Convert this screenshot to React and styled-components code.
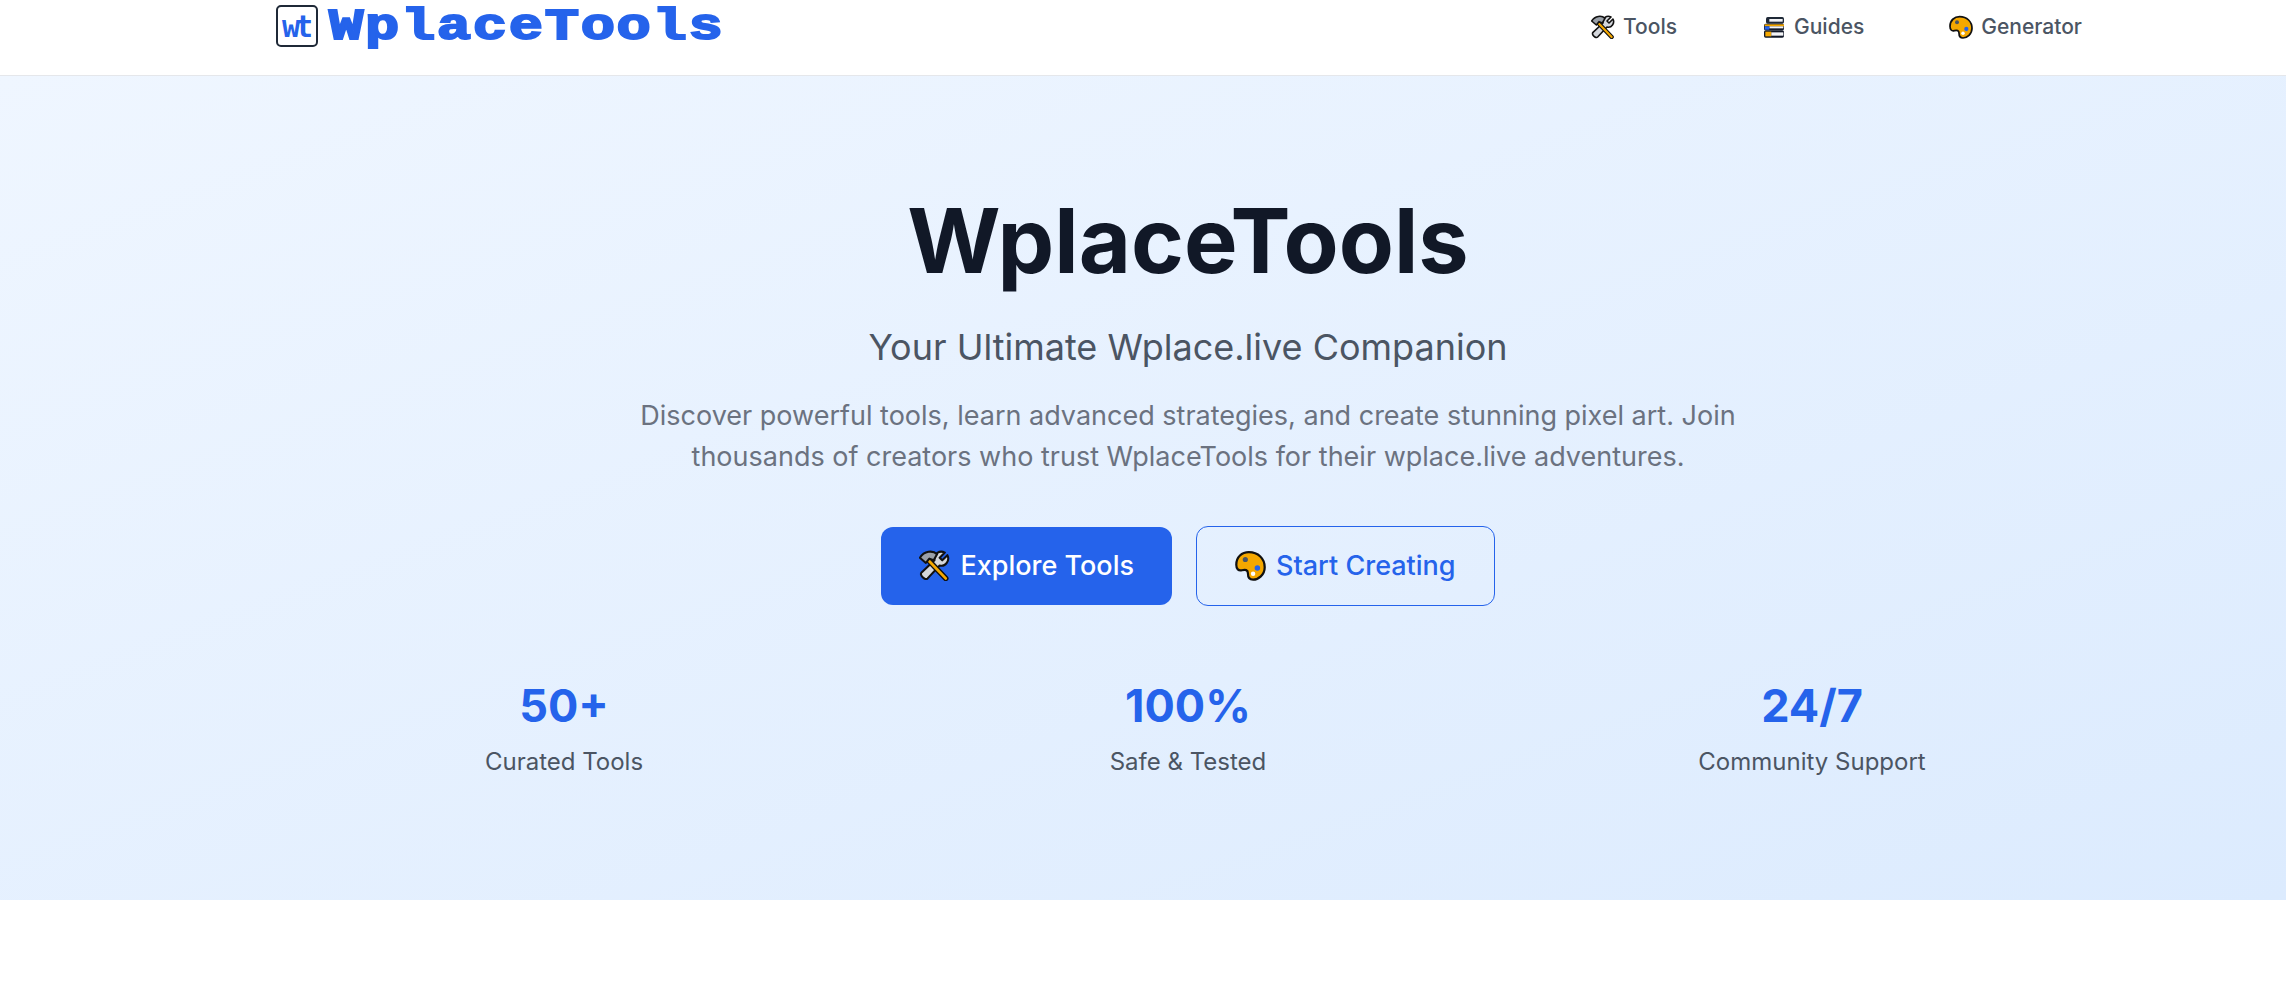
import styled, { createGlobalStyle } from "styled-components";

const GlobalStyle = createGlobalStyle`
  html, body {
    margin: 0;
    background: #ffffff;
    overflow: hidden;
  }
  body {
    font-family: Inter, "Liberation Sans", sans-serif;
  }
`;

const Page = styled.div`
  width: 2286px;
  height: 991px;
  background: #ffffff;
`;

const Header = styled.header`
  height: 76px;
  box-sizing: border-box;
  border-bottom: 1px solid #e5e7eb;
  padding: 0 204px 0 276px;
  display: flex;
  align-items: center;
  justify-content: space-between;
  background: #ffffff;
`;

const Brand = styled.div`
  display: flex;
  align-items: center;
  gap: 11px;
  margin-top: -23px;
`;

const LogoMark = styled.div`
  width: 42px;
  height: 42px;
  box-sizing: border-box;
  border: 2px solid #1f2937;
  border-radius: 5px;
  display: flex;
  align-items: center;
  justify-content: center;
  color: #2563eb;
  font-family: "DejaVu Sans Mono", monospace;
  font-weight: 700;
  font-size: 30px;
  letter-spacing: -5px;
  padding-right: 4px;
  background: #ffffff;
`;

const Wordmark = styled.div`
  color: #2563eb;
  font-family: "Liberation Mono", monospace;
  font-weight: 700;
  font-size: 45px;
  line-height: 44px;
  letter-spacing: 1.3px;
  margin-top: 3px;
  transform: scaleX(1.27);
  transform-origin: left center;
  -webkit-text-stroke: 2px #2563eb;
`;

const Nav = styled.nav`
  display: flex;
  align-items: center;
  gap: 85px;
  margin-top: -22px;
`;

const NavItem = styled.a`
  display: flex;
  align-items: center;
  gap: 8px;
  color: #4b5563;
  font-size: 21px;
  font-weight: 500;
  line-height: 28px;
`;

const Hero = styled.section`
  height: 824px;
  box-sizing: border-box;
  padding: 120px 100px 0 190px;
  background: linear-gradient(to bottom right, #eff6ff 0%, #dcebfe 100%);
  text-align: center;
`;

const Title = styled.h1`
  margin: 0;
  color: #111827;
  font-size: 90px;
  font-weight: 700;
  line-height: 90px;
`;

const Subtitle = styled.p`
  margin: 41px 0 0;
  color: #4b5563;
  font-size: 36px;
  font-weight: 400;
  line-height: 40px;
`;

const Lead = styled.p`
  margin: 28px auto 0;
  width: 1152px;
  color: #6b7280;
  font-size: 27px;
  line-height: 41px;
`;

const Actions = styled.div`
  margin-top: 49px;
  display: flex;
  justify-content: center;
  align-items: center;
  gap: 24px;
`;

const Button = styled.a`
  height: ${(p) => (p.$outline ? "80px" : "78px")};
  box-sizing: border-box;
  padding: 0 38px 1px;
  display: flex;
  align-items: center;
  gap: 10px;
  border-radius: 12px;
  font-size: 27px;
  font-weight: 500;
  background: ${(p) => (p.$outline ? "transparent" : "#2563eb")};
  color: ${(p) => (p.$outline ? "#2563eb" : "#ffffff")};
  border: ${(p) => (p.$outline ? "1px solid #2563eb" : "none")};
`;

const Stats = styled.div`
  margin: 77px auto 0;
  display: grid;
  grid-template-columns: repeat(3, 1fr);
  gap: 32px;
  width: 1840px;
`;

const Stat = styled.div`
  display: flex;
  flex-direction: column;
  align-items: center;
`;

const StatValue = styled.div`
  color: #2563eb;
  font-size: 45px;
  font-weight: 700;
  line-height: 45px;
`;

const StatLabel = styled.div`
  margin-top: 18px;
  color: #4b5563;
  font-size: 24px;
  line-height: 32px;
`;

const ToolsIcon = ({ size }) => (
  <svg width={size} height={size} viewBox="0 0 36 36" aria-hidden="true">
    <g strokeLinecap="round" strokeLinejoin="round">
      <path
        d="M33 6 L27 12 L24 9 L30 3 C24 0 17 4 18 12 L3 26 C0 29 7 36 10 33 L24 18 C31 20 36 12 33 6 Z"
        fill="#d4d7dc"
        stroke="#111"
        strokeWidth="2.4"
      />
      <path d="M12 13 L31 33" stroke="#111" strokeWidth="6.5" fill="none" />
      <path d="M12 13 L31 33" stroke="#f5a800" strokeWidth="3.2" fill="none" />
      <path
        d="M1 9 C6 1 16 0 21 5 L17 12 L12 10 L8 15 Z"
        fill="#9aa0a8"
        stroke="#111"
        strokeWidth="2.4"
      />
    </g>
  </svg>
);

const BooksIcon = ({ size }) => (
  <svg width={size} height={size} viewBox="0 0 36 36" aria-hidden="true">
    <rect x="6" y="3" width="27" height="10" rx="2.5" fill="#1f2937" />
    <rect x="11" y="6" width="20" height="4" fill="#f3f4f6" />
    <rect x="3" y="13" width="30" height="10" rx="2.5" fill="#111827" />
    <rect x="4" y="14" width="29" height="3" fill="#f5a800" />
    <rect x="11" y="17" width="21" height="3" fill="#f3f4f6" />
    <rect x="3" y="23" width="30" height="11" rx="2.5" fill="#111827" />
    <rect x="5" y="25" width="9" height="7" fill="#f5a800" />
    <rect x="14" y="26" width="18" height="5" fill="#f3f4f6" />
    <rect x="4" y="17" width="7" height="5" fill="#2563eb" />
  </svg>
);

const PaletteIcon = ({ size }) => (
  <svg width={size} height={size} viewBox="0 0 36 36" aria-hidden="true">
    <path
      d="M16 2.5 C27 2.5 34.5 10 34.5 20 C34.5 29 27 34.5 21 34.5 C16 34.5 15 31 15 27 C15 23 12 22.5 8 23.5 C4 24.5 1.5 22 1.5 17 C1.5 8 8 2.5 16 2.5 Z"
      fill="#f5a800"
      stroke="#111"
      strokeWidth="2.6"
    />
    <circle cx="12" cy="11" r="3" fill="#4b5563" />
    <circle cx="26" cy="21" r="3.2" fill="#2563eb" />
    <circle cx="21" cy="27.5" r="2.6" fill="#ffffff" />
  </svg>
);

export default function App() {
  return (
    <Page>
      <GlobalStyle />
      <Header>
        <Brand>
          <LogoMark>wt</LogoMark>
          <Wordmark>WplaceTools</Wordmark>
        </Brand>
        <Nav>
          <NavItem><ToolsIcon size={24} />Tools</NavItem>
          <NavItem><BooksIcon size={24} />Guides</NavItem>
          <NavItem><PaletteIcon size={24} />Generator</NavItem>
        </Nav>
      </Header>
      <Hero>
        <Title>WplaceTools</Title>
        <Subtitle>Your Ultimate Wplace.live Companion</Subtitle>
        <Lead>
          Discover powerful tools, learn advanced strategies, and create stunning pixel art. Join
          thousands of creators who trust WplaceTools for their wplace.live adventures.
        </Lead>
        <Actions>
          <Button><ToolsIcon size={31} />Explore Tools</Button>
          <Button $outline><PaletteIcon size={31} />Start Creating</Button>
        </Actions>
        <Stats>
          <Stat>
            <StatValue>50+</StatValue>
            <StatLabel>Curated Tools</StatLabel>
          </Stat>
          <Stat>
            <StatValue>100%</StatValue>
            <StatLabel>Safe &amp; Tested</StatLabel>
          </Stat>
          <Stat>
            <StatValue>24/7</StatValue>
            <StatLabel>Community Support</StatLabel>
          </Stat>
        </Stats>
      </Hero>
    </Page>
  );
}
